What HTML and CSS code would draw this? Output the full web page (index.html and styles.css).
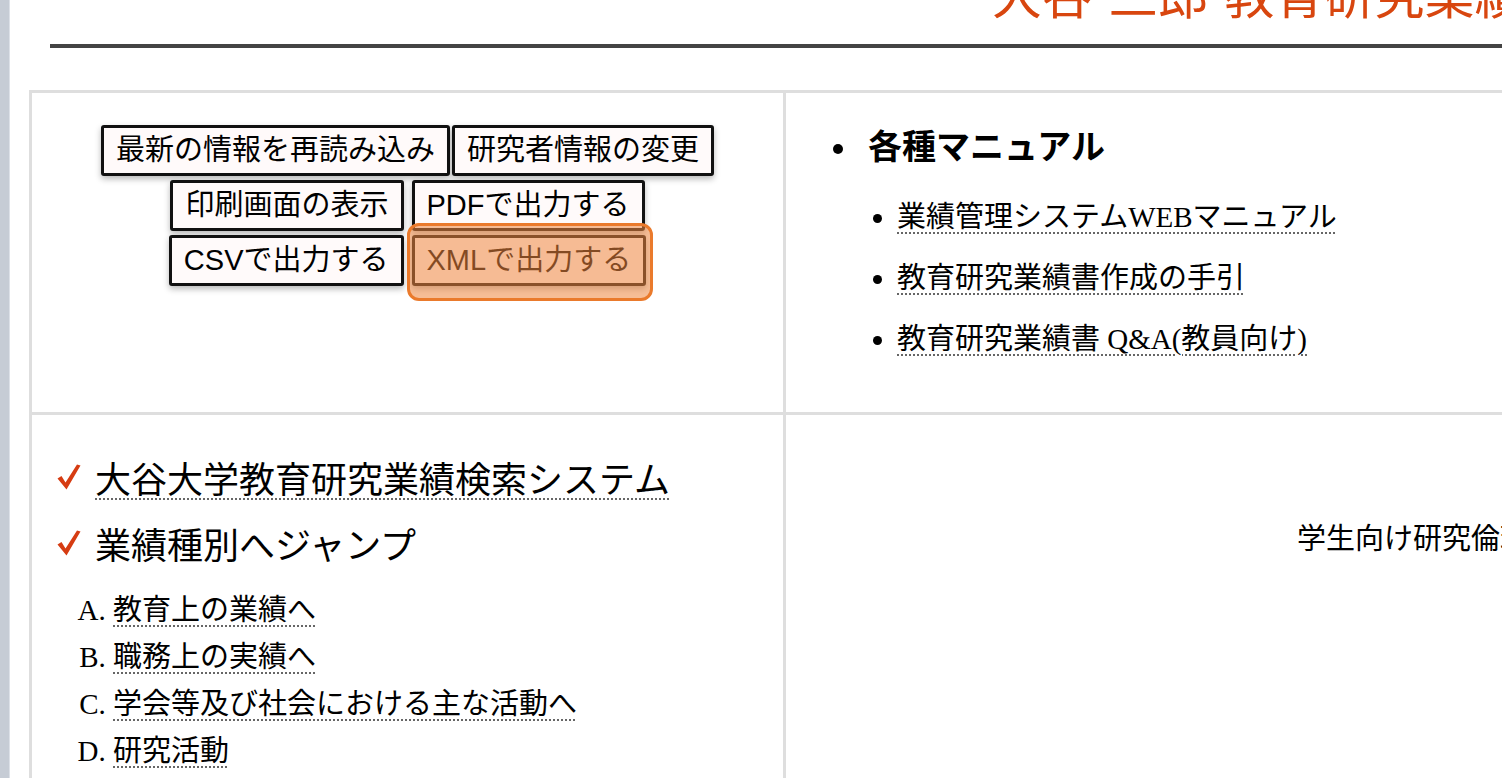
FILE: index.html
```html
<!DOCTYPE html>
<html lang="ja">
<head>
    <meta charset="UTF-8">
    <meta name="viewport" content="width=device-width, initial-scale=1.0">
    <title>教育研究業績書</title>
    <link rel="stylesheet" href="styles.css">
</head>
<body>
    <div class="window">
        <div class="window-edge"></div>

        <div class="page">
            <header class="title-bar">
                <h1 class="title">大谷 三郎 教育研究業績書</h1>
            </header>

            <table class="info-table">
                <tr class="row-top">
                    <td class="cell-actions">
                        <div class="btn-row btn-row-tight">
                            <button class="action-btn">最新の情報を再読み込み</button>
                            <button class="action-btn">研究者情報の変更</button>
                        </div>
                        <div class="btn-row">
                            <button class="action-btn">印刷画面の表示</button>
                            <button class="action-btn">PDFで出力する</button>
                        </div>
                        <div class="btn-row">
                            <button class="action-btn">CSVで出力する</button>
                            <span class="highlight">
                                <button class="action-btn">XMLで出力する</button>
                            </span>
                        </div>
                    </td>
                    <td class="cell-manual">
                        <ul class="manual-list">
                            <li>
                                <h3 class="manual-title">各種マニュアル</h3>
                                <ul class="manual-links">
                                    <li><a href="#">業績管理システムWEBマニュアル</a></li>
                                    <li><a href="#">教育研究業績書作成の手引</a></li>
                                    <li><a href="#">教育研究業績書 Q&amp;A(教員向け)</a></li>
                                </ul>
                            </li>
                        </ul>
                    </td>
                </tr>
                <tr class="row-bottom">
                    <td class="cell-nav">
                        <p class="check-item">
                            <svg class="check" viewBox="0 0 24 26"><path d="M0.5 14.5 L4.5 12 L8.5 18.5 L20 0.5 L23.5 1.5 L9.5 25.5 Z"/></svg>
                            <a href="#">大谷大学教育研究業績検索システム</a>
                        </p>
                        <p class="check-item">
                            <svg class="check" viewBox="0 0 24 26"><path d="M0.5 14.5 L4.5 12 L8.5 18.5 L20 0.5 L23.5 1.5 L9.5 25.5 Z"/></svg>
                            業績種別へジャンプ
                        </p>
                        <ol class="jump-list">
                            <li><a href="#">教育上の業績へ</a></li>
                            <li><a href="#">職務上の実績へ</a></li>
                            <li><a href="#">学会等及び社会における主な活動へ</a></li>
                            <li><a href="#">研究活動</a></li>
                        </ol>
                    </td>
                    <td class="cell-notice">
                        <p class="notice">学生向け研究倫理教育について</p>
                    </td>
                </tr>
            </table>
        </div>
    </div>
</body>
</html>
```

FILE: styles.css
```css
body, html {
    margin: 0;
    padding: 0;
    height: 100%;
    overflow: hidden;
    background-color: #fff;
    color: #000;
    font-family: "Liberation Serif", "Noto Sans CJK JP", serif;
}
.window {
    display: flex;
    height: 100%;
}
.window-edge {
    flex: none;
    width: 9px;
    background-color: #c6ccd5;
    border-right: 1px solid #dde1e8;
}
.page {
    flex: none;
}
.title-bar {
    margin-left: 40px;
    padding-bottom: 26px;
    border-bottom: 4px solid #444;
}
.title {
    margin: -33px 0 0;
    padding-left: 942px;
    font-family: "Noto Sans CJK JP", sans-serif;
    font-size: 50px;
    line-height: 51px;
    font-weight: normal;
    word-spacing: 5px;
    color: #d8460f;
    white-space: nowrap;
}
.info-table {
    margin: 42px 0 0 19px;
    border-spacing: 0;
    border-top: 3px solid #dedede;
    border-left: 3px solid #dedede;
}
.info-table td {
    padding: 0;
    vertical-align: top;
    border-right: 3px solid #dedede;
    border-bottom: 3px solid #dedede;
}
.row-top td { height: 319px; }
.row-bottom td { height: 420px; }
.cell-actions {
    width: 754px;
    padding-top: 32px !important;
    box-sizing: border-box;
}
.cell-manual { width: 900px; }

/* buttons */
.btn-row {
    display: flex;
    justify-content: center;
    gap: 8px;
    margin-bottom: 4px;
}
.btn-row-tight { gap: 2px; }
.action-btn {
    padding: 5px 12px;
    border: 3px solid #111;
    border-radius: 3px;
    background-color: #fffafa;
    box-shadow: 0 3px 6px rgba(0, 0, 0, 0.28);
    font-family: "Liberation Sans", "Noto Sans CJK JP", sans-serif;
    font-size: 29px;
    line-height: 35px;
    color: #000;
    cursor: pointer;
}
.highlight {
    position: relative;
    display: inline-flex;
}
.highlight::after {
    content: "";
    position: absolute;
    top: -12px;
    left: -5px;
    right: -7px;
    bottom: -15px;
    border: 3px solid #ea7a2c;
    border-radius: 12px;
    background-color: rgba(239, 134, 64, 0.55);
}

/* manuals */
.manual-list {
    margin: 27px 0 0;
    padding-left: 74px;
    list-style: disc;
    font-size: 34px;
    font-weight: bold;
}
.manual-title {
    margin: 0;
    padding-left: 8px;
    font-size: 34px;
}
.manual-links {
    margin: 31px 0 0;
    padding-left: 37px;
    list-style: disc;
    font-size: 29px;
    font-weight: normal;
}
.manual-links li {
    line-height: 35px;
    margin-bottom: 26px;
}
a {
    color: #000;
    text-decoration: underline dotted #666;
    text-decoration-thickness: 2px;
    text-underline-offset: 5px;
}

/* jump navigation */
.cell-nav { padding-top: 40px !important; }
.check-item {
    display: flex;
    align-items: center;
    gap: 14px;
    margin: 0 0 22px 25px;
    font-family: "Noto Sans CJK JP", sans-serif;
    font-size: 36px;
    line-height: 44px;
}
.check {
    width: 24px;
    height: 26px;
    fill: #d63c12;
}
.jump-list {
    margin: 0;
    padding-left: 81px;
    list-style: upper-alpha;
    font-size: 29px;
    line-height: 47px;
}
.cell-notice { padding-left: 511px !important; }
.notice {
    margin: 101px 0 0;
    font-family: "Noto Sans CJK JP", sans-serif;
    font-size: 29px;
    line-height: 40px;
    white-space: nowrap;
}
```
